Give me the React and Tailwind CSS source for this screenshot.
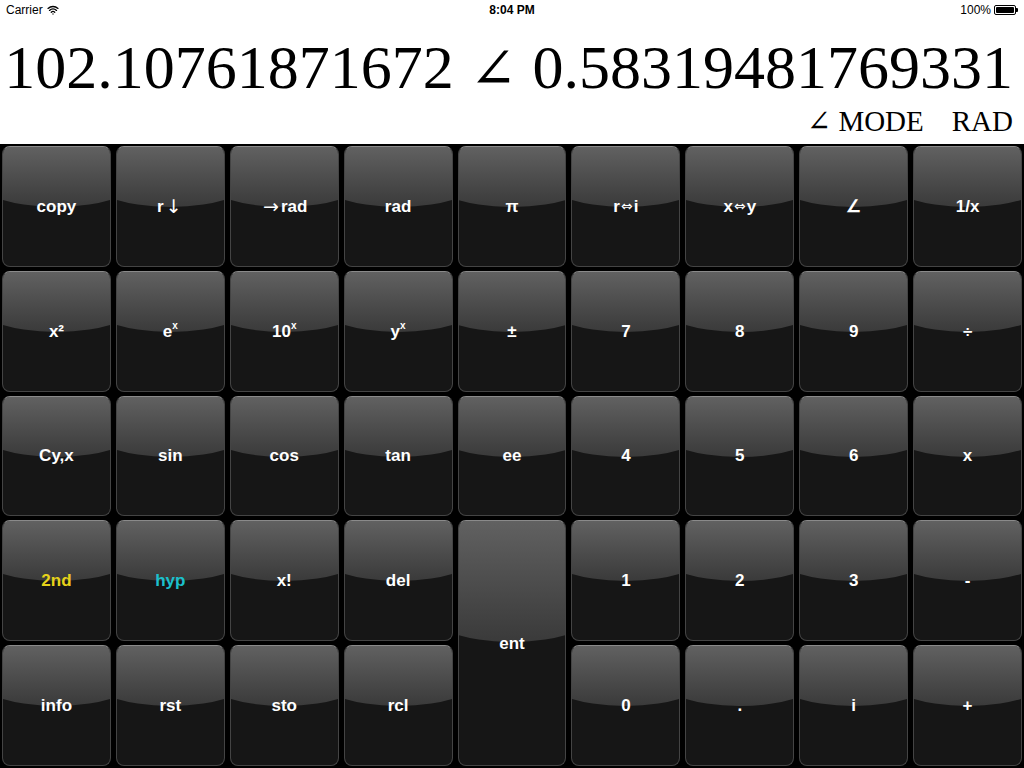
import { Wifi } from 'lucide-react';

const keys = [
  ['copy'], ['r', null, '↓'], ['', null, '→', 'rad'], ['rad'], ['π'], ['r', null, '⇔', 'i'], ['x', null, '⇔', 'y'], ['∠'], ['1/x'],
  ['x²'], ['e', 'x'], ['10', 'x'], ['y', 'x'], ['±'], ['7'], ['8'], ['9'], ['÷'],
  ['Cy,x'], ['sin'], ['cos'], ['tan'], ['ee'], ['4'], ['5'], ['6'], ['x'],
  ['2nd'], ['hyp'], ['x!'], ['del'], ['ent'], ['1'], ['2'], ['3'], ['-'],
  ['info'], ['rst'], ['sto'], ['rcl'], ['0'], ['.'], ['i'], ['+'],
];

function Key({ label, sup, arrow, tail, tall, color }) {
  return (
    <button
      className={`relative overflow-hidden rounded-[8px] bg-[#161616] border border-[#444] border-t-[#8a8a8a] shadow-[inset_0_1px_0_#6a6a6a] ${tall ? 'row-span-2' : ''}`}
    >
      {/* gloss */}
      <div
        className={`absolute left-[-30%] right-[-30%] top-0 rounded-b-[50%_32px] bg-gradient-to-b from-[#616161] to-[#3a3a3a] ${tall ? 'h-[49.5%]' : 'h-[50.5%]'}`}
      />
      <span
        className={`relative flex items-center justify-center text-[17px] font-bold leading-none ${color || 'text-white'}`}
        style={{ fontFamily: '"Liberation Sans", Arial, sans-serif' }}
      >
        {label}
        {sup && <span className="text-[10px] relative top-[-5px]">{sup}</span>}
        {arrow && (
          <span
            className={`font-normal ${arrow === '⇔' ? 'text-[14px] mx-[1px]' : 'text-[19px] mx-[2px]'}`}
            style={{ fontFamily: '"DejaVu Sans", sans-serif' }}
          >
            {arrow}
          </span>
        )}
        {tail}
      </span>
    </button>
  );
}

export default function App() {
  return (
    <div className="w-[1024px] h-[768px] flex flex-col bg-black overflow-hidden">
      {/* Status bar */}
      <div
        className="h-[20px] bg-white flex items-center justify-between px-[6px] text-[12px] text-black"
        style={{ fontFamily: '"Liberation Sans", Arial, sans-serif' }}
      >
        <div className="flex items-center gap-[4px] w-[120px]">
          <span>Carrier</span>
          <Wifi size={12} strokeWidth={2.6} />
        </div>
        <span className="font-semibold">8:04 PM</span>
        <div className="flex items-center justify-end gap-[3px] w-[120px]">
          <span>100%</span>
          <div className="flex items-center">
            <div className="w-[22px] h-[10px] border border-black rounded-[2px] p-[1px]">
              <div className="w-full h-full bg-black rounded-[1px]" />
            </div>
            <div className="w-[2px] h-[4px] bg-black rounded-r-[1px]" />
          </div>
        </div>
      </div>

      {/* Display */}
      <div
        className="h-[124px] bg-white flex flex-col items-end pr-[11px] text-black"
        style={{ fontFamily: '"Liberation Serif", "Times New Roman", "DejaVu Serif", serif' }}
      >
        <div className="text-[62px] leading-none mt-[16px] whitespace-nowrap">
          102.10761871672 <span className="text-[57px]">∠</span> 0.58319481769331
        </div>
        <div className="flex gap-[28px] text-[29px] leading-none mt-[9px]">
          <span>∠ MODE</span>
          <span>RAD</span>
        </div>
      </div>

      {/* Keypad */}
      <div className="flex-1 grid grid-cols-9 grid-rows-5 gap-x-[5px] gap-y-[4px] p-[2px] bg-black">
        {keys.map(([label, sup, arrow, tail], i) => (
          <Key
            key={i}
            label={label}
            sup={sup}
            arrow={arrow}
            tail={tail}
            tall={label === 'ent'}
            color={label === '2nd' ? 'text-[#e6d21a]' : label === 'hyp' ? 'text-[#1bc0cc]' : undefined}
          />
        ))}
      </div>
    </div>
  );
}
